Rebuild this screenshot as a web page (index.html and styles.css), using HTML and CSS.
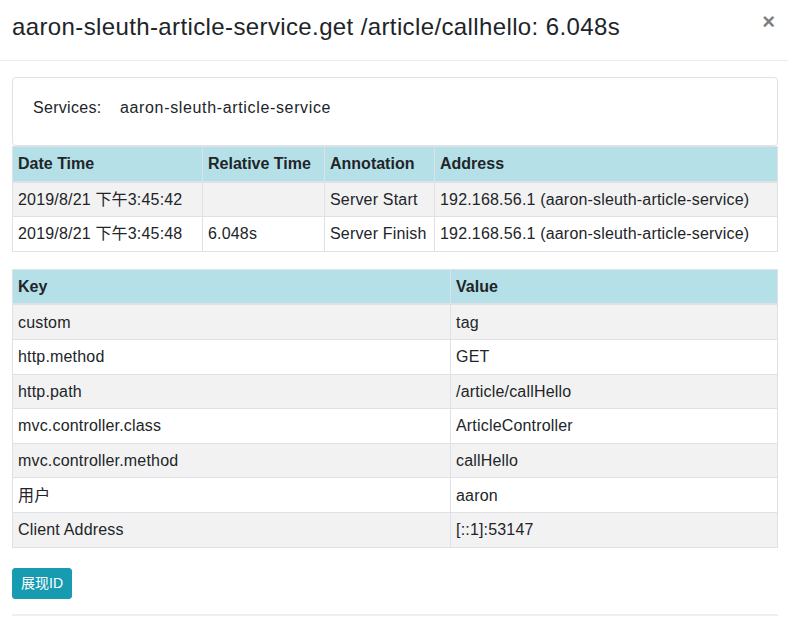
FILE: index.html
```html
<!DOCTYPE html>
<html lang="zh">
<head>
<meta charset="utf-8">
<title>Span detail</title>
<link rel="stylesheet" href="styles.css">
</head>
<body>
<div class="modal">
  <div class="modal-header">
    <h5 class="modal-title">aaron-sleuth-article-service.get /article/callhello: 6.048s</h5>
    <span class="close">&times;</span>
  </div>
  <div class="modal-body">
    <div class="services">
      <span class="label">Services:</span><span class="value">aaron-sleuth-article-service</span>
    </div>
    <table class="tbl tbl-ann">
      <colgroup><col class="c1"><col class="c2"><col class="c3"><col class="c4"></colgroup>
      <thead>
        <tr><th>Date Time</th><th>Relative Time</th><th>Annotation</th><th>Address</th></tr>
      </thead>
      <tbody>
        <tr><td>2019/8/21 下午3:45:42</td><td></td><td>Server Start</td><td>192.168.56.1 (aaron-sleuth-article-service)</td></tr>
        <tr><td>2019/8/21 下午3:45:48</td><td>6.048s</td><td>Server Finish</td><td>192.168.56.1 (aaron-sleuth-article-service)</td></tr>
      </tbody>
    </table>
    <table class="tbl tbl-kv">
      <colgroup><col class="k"><col class="v"></colgroup>
      <thead>
        <tr><th>Key</th><th>Value</th></tr>
      </thead>
      <tbody>
        <tr><td>custom</td><td>tag</td></tr>
        <tr><td>http.method</td><td>GET</td></tr>
        <tr><td>http.path</td><td>/article/callHello</td></tr>
        <tr><td>mvc.controller.class</td><td>ArticleController</td></tr>
        <tr><td>mvc.controller.method</td><td>callHello</td></tr>
        <tr><td>用户</td><td>aaron</td></tr>
        <tr><td>Client Address</td><td>[::1]:53147</td></tr>
      </tbody>
    </table>
    <button class="btn-info" type="button">展现ID</button>
    <div class="divider"></div>
  </div>
</div>
</body>
</html>
```

FILE: styles.css
```css
* { box-sizing: border-box; }
html, body { margin: 0; padding: 0; background: #fff; }
body {
  font-family: "Liberation Sans", Arial, "Noto Sans CJK SC", sans-serif;
  color: #212529;
  font-size: 16px;
  line-height: 24px;
}
.modal { width: 788px; }
.modal-header {
  display: flex;
  justify-content: space-between;
  align-items: flex-start;
  height: 61px;
  padding: 12px 13px 0 12px;
  border-bottom: 1px solid #e9ecef;
}
.modal-title {
  margin: 0;
  font-size: 24px;
  line-height: 30px;
  font-weight: 400;
  letter-spacing: 0.38px;
}
.close {
  font-size: 22px;
  line-height: 20px;
  font-weight: 700;
  color: #000;
  opacity: .5;
  margin-top: 0;
}
.modal-body { padding: 16px 10px 0 12px; }
.services {
  border: 1px solid #dee2e6;
  border-radius: 4px;
  padding: 18px 20px 25px 20px;
}
.services .label { display: inline-block; width: 87px; letter-spacing: 0.3px; }
.services .value { letter-spacing: 0.65px; }
.tbl {
  width: 100%;
  border-collapse: collapse;
  table-layout: fixed;
  border: 1px solid #dee2e6;
  margin-bottom: 17px;
}
.tbl th, .tbl td {
  border: 1px solid #dee2e6;
  padding: 5.3px 5px 4.3px;
  text-align: left;
  vertical-align: top;
  white-space: nowrap;
  overflow: hidden;
}
.tbl td { letter-spacing: 0.18px; }
.tbl th {
  font-weight: 700;
  background: #b5e0e7;
  padding: 4.8px 5px 4.8px;
  border-bottom: 2px solid #dee2e6;
}
.tbl tbody tr:nth-child(odd) td { background: #f2f2f2; }
.tbl-ann col.c1 { width: 190px; }
.tbl-ann col.c2 { width: 122px; }
.tbl-ann col.c3 { width: 110px; }
.tbl-kv col.k { width: 438px; }
.btn-info {
  display: block;
  margin-top: 20px;
  height: 31px;
  padding: 0 8px;
  background: #179bb0;
  color: #fff;
  border: 1px solid #179bb0;
  border-radius: 3px;
  font-family: "Liberation Sans", Arial, "Noto Sans CJK SC", sans-serif;
  font-size: 14px;
  line-height: 29px;
}
.divider {
  margin-top: 15px;
  height: 2px;
  background: #eeeff1;
}
```
